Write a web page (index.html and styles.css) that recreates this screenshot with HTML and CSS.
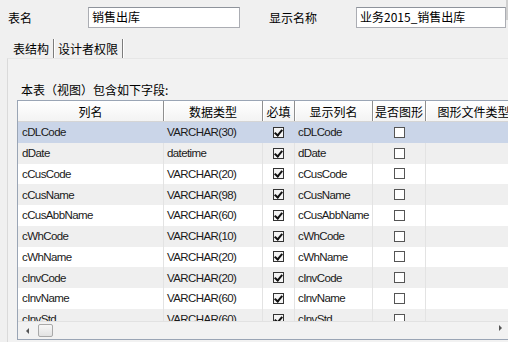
FILE: index.html
```html
<!DOCTYPE html>
<html>
<head>
<meta charset="utf-8">
<link rel="stylesheet" href="styles.css">
</head>
<body>
<div class="frame">
  <div class="top">
    <span class="lbl lbl1">表名</span>
    <div class="inp inp1">销售出库</div>
    <span class="lbl lbl2">显示名称</span>
    <div class="inp inp2">业务2015_销售出库</div>
    <div class="edge"></div>
  </div>
  <div class="tabs">
    <span class="tab">表结构</span>
    <span class="tab">设计者权限</span>
  </div>
  <div class="panel">
    <div class="caption">本表（视图）包含如下字段:</div>
    <div class="grid">
      <div class="rows">
        <div class="row head">
          <div class="c">列名</div>
          <div class="c">数据类型</div>
          <div class="c">必填</div>
          <div class="c">显示列名</div>
          <div class="c">是否图形</div>
          <div class="c">图形文件类型</div>
        </div>
        <div class="row sel"><div class="c">cDLCode</div><div class="c">VARCHAR(30)</div><div class="c ck"><span class="box on"></span></div><div class="c">cDLCode</div><div class="c ck"><span class="box"></span></div><div class="c"></div></div>
        <div class="row alt"><div class="c">dDate</div><div class="c">datetime</div><div class="c ck"><span class="box on"></span></div><div class="c">dDate</div><div class="c ck"><span class="box"></span></div><div class="c"></div></div>
        <div class="row"><div class="c">cCusCode</div><div class="c">VARCHAR(20)</div><div class="c ck"><span class="box on"></span></div><div class="c">cCusCode</div><div class="c ck"><span class="box"></span></div><div class="c"></div></div>
        <div class="row alt"><div class="c">cCusName</div><div class="c">VARCHAR(98)</div><div class="c ck"><span class="box on"></span></div><div class="c">cCusName</div><div class="c ck"><span class="box"></span></div><div class="c"></div></div>
        <div class="row"><div class="c">cCusAbbName</div><div class="c">VARCHAR(60)</div><div class="c ck"><span class="box on"></span></div><div class="c">cCusAbbName</div><div class="c ck"><span class="box"></span></div><div class="c"></div></div>
        <div class="row alt"><div class="c">cWhCode</div><div class="c">VARCHAR(10)</div><div class="c ck"><span class="box on"></span></div><div class="c">cWhCode</div><div class="c ck"><span class="box"></span></div><div class="c"></div></div>
        <div class="row"><div class="c">cWhName</div><div class="c">VARCHAR(20)</div><div class="c ck"><span class="box on"></span></div><div class="c">cWhName</div><div class="c ck"><span class="box"></span></div><div class="c"></div></div>
        <div class="row alt"><div class="c">cInvCode</div><div class="c">VARCHAR(20)</div><div class="c ck"><span class="box on"></span></div><div class="c">cInvCode</div><div class="c ck"><span class="box"></span></div><div class="c"></div></div>
        <div class="row"><div class="c">cInvName</div><div class="c">VARCHAR(60)</div><div class="c ck"><span class="box on"></span></div><div class="c">cInvName</div><div class="c ck"><span class="box"></span></div><div class="c"></div></div>
        <div class="row alt"><div class="c">cInvStd</div><div class="c">VARCHAR(60)</div><div class="c ck"><span class="box on"></span></div><div class="c">cInvStd</div><div class="c ck"><span class="box"></span></div><div class="c"></div></div>
      </div>
      <div class="hscroll">
        <span class="arrow left"></span>
        <span class="thumb"></span>
        <span class="spacer"></span>
        <span class="arrow right"></span>
      </div>
    </div>
  </div>
</div>
</body>
</html>
```

FILE: styles.css
```css
html, body {
  margin: 0;
  padding: 0;
}
body {
  width: 508px;
  height: 342px;
  overflow: hidden;
  background: #f0f0f0;
  font-family: "Noto Sans CJK SC", "Liberation Sans", sans-serif;
  font-size: 12px;
  color: #000;
}
.frame {
  width: 508px;
  height: 342px;
  display: flex;
  flex-direction: column;
}
.top {
  height: 35px;
  display: flex;
  align-items: center;
  padding-left: 8px;
  flex: none;
}
.lbl {
  line-height: 16px;
}
.lbl1 { width: 80px; }
.lbl2 { width: 87px; margin-left: 29px; }
.inp {
  box-sizing: border-box;
  height: 21px;
  border: 1px solid #abadb3;
  border-top-color: #8e939b;
  background: #fff;
  padding: 0 0 0 3px;
  line-height: 18px;
  font-size: 12px;
}
.inp1 { width: 152px; }
.inp2 { width: 150px; }
.edge {
  align-self: flex-start;
  width: 2px;
  height: 20px;
  background: #cfcfcf;
}
.tabs {
  height: 23px;
  display: flex;
  align-items: flex-end;
  padding-left: 10px;
  flex: none;
}
.tab {
  height: 19px;
  line-height: 19px;
  padding: 0 4px 0 3px;
  border-right: 1px solid #7c7c7c;
  box-shadow: 1px 0 0 #fff;
  margin-right: 1px;
}
.panel {
  flex: 1;
  margin-left: 7px;
  border-left: 1px solid #dadada;
  border-top: 1px solid #e6e6e6;
  background: #f2f2f2;
  display: flex;
  flex-direction: column;
  min-height: 0;
}
.caption {
  padding: 22px 0 0 13px;
  line-height: 18px;
  height: 19px;
  flex: none;
}
.grid {
  margin-left: 9px;
  width: 520px;
  flex: 1;
  margin-bottom: 2px;
  border: 1px solid #9aa5b5;
  border-right: none;
  background: #fff;
  display: flex;
  flex-direction: column;
  min-height: 0;
}
.rows {
  flex: 1;
  overflow: hidden;
  min-height: 0;
}
.row {
  display: grid;
  grid-template-columns: 146px 99px 32px 78px 53px 96px;
  height: 20.75px;
  align-items: center;
  font-family: "Liberation Sans", "Noto Sans CJK SC", sans-serif;
  font-size: 11.5px;
  letter-spacing: -0.6px;
  color: #1a1a1a;
}
.row .c {
  height: 100%;
  display: flex;
  align-items: center;
  padding-left: 3px;
  box-sizing: border-box;
  border-right: 1px solid #e3e3e3;
  white-space: nowrap;
  overflow: hidden;
}
.row .c:first-child { padding-left: 4px; }
.row .ck {
  justify-content: center;
  padding-left: 0;
}
.row.head {
  height: 20px;
  background: linear-gradient(#ffffff, #f3f3f3);
  border-bottom: 1px solid #d5d5d5;
  font-family: "Noto Sans CJK SC", sans-serif;
  font-size: 12px;
  letter-spacing: 0;
  color: #000;
}
.row.head .c {
  justify-content: center;
  padding-left: 0;
  border-right: 1px solid #8f8f8f;
  box-shadow: 1px 0 0 #fff;
  overflow: visible;
}
.row.sel { background: #cad5e8; }
.row.sel .c { border-right-color: #cad5e8; }
.row.alt { background: #efefef; }
.box {
  width: 11px;
  height: 11px;
  box-sizing: border-box;
  border: 1px solid #555;
  background: #fff;
  display: block;
  position: relative;
}
.box.on {
  border-color: #333;
  background: #f4f4f4;
}
.box.on::after {
  content: "";
  position: absolute;
  left: 2px;
  top: 0px;
  width: 3px;
  height: 6px;
  border-right: 2px solid #111;
  border-bottom: 2px solid #111;
  transform: rotate(40deg);
}
.hscroll {
  height: 17px;
  flex: none;
  display: flex;
  align-items: center;
  background: #f2f2f2;
  border-top: 1px solid #e2e2e2;
  width: 490px;
}
.arrow {
  width: 0;
  height: 0;
  border-top: 3px solid transparent;
  border-bottom: 3px solid transparent;
}
.arrow.left {
  margin-left: 8px;
  border-right: 3px solid #555;
}
.arrow.right {
  margin-right: 6px;
  border-left: 3px solid #555;
  margin-top: -6px;
}
.thumb {
  margin-left: 9px;
  width: 15px;
  height: 13px;
  box-sizing: border-box;
  border: 1px solid #a9a9a9;
  border-radius: 2px;
  background: linear-gradient(#f7f7f7, #e2e2e2);
}
.spacer { flex: 1; }
```
